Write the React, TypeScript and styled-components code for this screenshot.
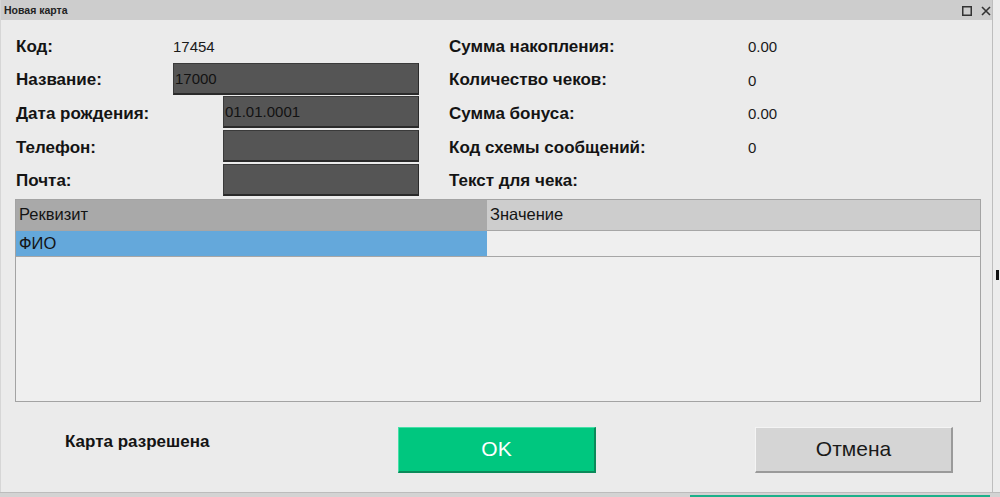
import React from "react";
import styled, { createGlobalStyle } from "styled-components";

const Global = createGlobalStyle`
  html, body { margin: 0; padding: 0; }
  body {
    width: 1000px; height: 497px; overflow: hidden;
    background: #e9e9e9;
    font-family: "Liberation Sans", Arial, sans-serif;
    color: #111;
  }
`;

const Page = styled.div`
  display: flex;
  flex-direction: column;
  width: 1000px;
  height: 497px;
`;

const Top = styled.div`
  display: flex;
  height: 492px;
`;

const Window = styled.div`
  width: 993px;
  display: flex;
  flex-direction: column;
  background: #ebebeb;
  border-left: 1px solid #d6d6d6;
  border-right: 1px solid #bdbdbd;
  box-sizing: border-box;
`;

const SideGap = styled.div`
  flex: 1;
  background: #ececec;
  position: relative;
`;

const Mark = styled.div`
  position: absolute;
  left: 3px;
  top: 270px;
  width: 3px;
  height: 10px;
  background: #111;
`;

const TitleBar = styled.div`
  height: 20px;
  flex: none;
  background: #cdcdcd;
  display: flex;
  align-items: center;
  justify-content: space-between;
  padding: 0 1px 0 3px;
`;

const Title = styled.span`
  font-size: 10.5px;
  font-weight: bold;
  color: #222;
`;

const TitleButtons = styled.div`
  display: flex;
  align-items: center;
  gap: 9px;
  margin-top: 2px;
`;

const Form = styled.div`
  display: flex;
  padding: 9px 0 0 15px;
  flex: none;
`;

const LeftCol = styled.div`
  width: 403px;
  display: flex;
  flex-direction: column;
  gap: 1.7px;
`;

const RightCol = styled.div`
  margin-left: 30px;
  display: flex;
  flex-direction: column;
  gap: 1.7px;
`;

const Row = styled.div`
  height: 32px;
  flex: none;
  display: flex;
  align-items: center;
`;

const Label = styled.div<{ $w: number }>`
  width: ${(p) => p.$w}px;
  flex: none;
  padding-top: 3px;
  font-size: 17px;
  font-weight: bold;
  color: #141414;
`;

const Value = styled.div`
  padding-top: 3px;
  font-size: 15px;
  color: #1a1a1a;
`;

const Input = styled.div<{ $indent: number }>`
  margin-left: ${(p) => p.$indent}px;
  flex: 1;
  height: 32px;
  box-sizing: border-box;
  background: #555555;
  border: 1px solid #3a3a3a;
  border-right-color: #2a2a2a;
  border-bottom: 2px solid #2a2a2a;
  display: flex;
  align-items: center;
  padding-left: 1px;
  font-size: 15px;
  color: #121212;
`;

const Table = styled.div`
  margin: 3px 0 0 14px;
  width: 966px;
  height: 203px;
  box-sizing: border-box;
  border: 1px solid #a3a3a3;
  background: #efefef;
  display: flex;
  flex-direction: column;
  flex: none;
`;

const TRow = styled.div<{ $h: number }>`
  display: grid;
  grid-template-columns: 471px 1fr;
  height: ${(p) => p.$h}px;
  flex: none;
  border-bottom: 1px solid #a6a6a6;
  box-sizing: border-box;
`;

const Cell = styled.div<{ $bg: string }>`
  background: ${(p) => p.$bg};
  display: flex;
  align-items: center;
  padding-left: 3px;
  font-size: 16.5px;
  color: #141414;
`;

const Footer = styled.div`
  flex: 1;
  display: flex;
  align-items: flex-start;
  padding-top: 25px;
`;

const Status = styled.div`
  width: 333px;
  padding-left: 64px;
  margin-top: 5px;
  font-size: 17px;
  font-weight: bold;
  color: #141414;
`;

const Button = styled.div<{ $primary?: boolean }>`
  width: 198px;
  height: 46px;
  box-sizing: border-box;
  display: flex;
  align-items: center;
  justify-content: center;
  font-size: 21px;
  background: ${(p) => (p.$primary ? "#00c77f" : "#d5d5d5")};
  color: ${(p) => (p.$primary ? "#ffffff" : "#1a1a1a")};
  border: 1px solid ${(p) => (p.$primary ? "#45e0a8" : "#f4f4f4")};
  border-right: 2px solid ${(p) => (p.$primary ? "#0a8a5a" : "#9a9a9a")};
  border-bottom: 2px solid ${(p) => (p.$primary ? "#0a8a5a" : "#9a9a9a")};
`;

const ButtonGap = styled.div`
  width: 159px;
`;

const Bottom = styled.div`
  height: 5px;
  flex: none;
  background: #d3d3d3;
  border-top: 1px solid #bcbcbc;
  box-sizing: border-box;
  display: flex;
  align-items: flex-end;
`;

const Teal = styled.div`
  margin-left: 690px;
  width: 300px;
  height: 2px;
  background: #1cb08a;
`;

const leftRows: { label: string; value?: string; input?: string; indent?: number }[] = [
  { label: "Код:", value: "17454" },
  { label: "Название:", input: "17000", indent: 0 },
  { label: "Дата рождения:", input: "01.01.0001", indent: 50 },
  { label: "Телефон:", input: "", indent: 50 },
  { label: "Почта:", input: "", indent: 50 },
];

const rightRows = [
  { label: "Сумма накопления:", value: "0.00" },
  { label: "Количество чеков:", value: "0" },
  { label: "Сумма бонуса:", value: "0.00" },
  { label: "Код схемы сообщений:", value: "0" },
  { label: "Текст для чека:", value: "" },
];

export default function App() {
  return (
    <Page>
      <Global />
      <Top>
        <Window>
          <TitleBar>
            <Title>Новая карта</Title>
            <TitleButtons>
              <svg width="10" height="10" viewBox="0 0 10 10">
                <rect x="0.75" y="0.75" width="8.5" height="8.5" fill="none" stroke="#333" strokeWidth="1.5" />
              </svg>
              <svg width="10" height="10" viewBox="0 0 10 10">
                <path d="M1 1 L9 9 M9 1 L1 9" stroke="#333" strokeWidth="1.6" />
              </svg>
            </TitleButtons>
          </TitleBar>
          <Form>
            <LeftCol>
              {leftRows.map((r) => (
                <Row key={r.label}>
                  <Label $w={157}>{r.label}</Label>
                  {r.input !== undefined ? (
                    <Input $indent={r.indent ?? 0}>{r.input}</Input>
                  ) : (
                    <Value>{r.value}</Value>
                  )}
                </Row>
              ))}
            </LeftCol>
            <RightCol>
              {rightRows.map((r) => (
                <Row key={r.label}>
                  <Label $w={299}>{r.label}</Label>
                  <Value>{r.value}</Value>
                </Row>
              ))}
            </RightCol>
          </Form>
          <Table>
            <TRow $h={31}>
              <Cell $bg="#a9a9a9">Реквизит</Cell>
              <Cell $bg="#cdcdcd">Значение</Cell>
            </TRow>
            <TRow $h={26}>
              <Cell $bg="#64a8db">ФИО</Cell>
              <Cell $bg="#efefef"></Cell>
            </TRow>
          </Table>
          <Footer>
            <Status>Карта разрешена</Status>
            <Button $primary>OK</Button>
            <ButtonGap />
            <Button>Отмена</Button>
          </Footer>
        </Window>
        <SideGap>
          <Mark />
        </SideGap>
      </Top>
      <Bottom>
        <Teal />
      </Bottom>
    </Page>
  );
}
